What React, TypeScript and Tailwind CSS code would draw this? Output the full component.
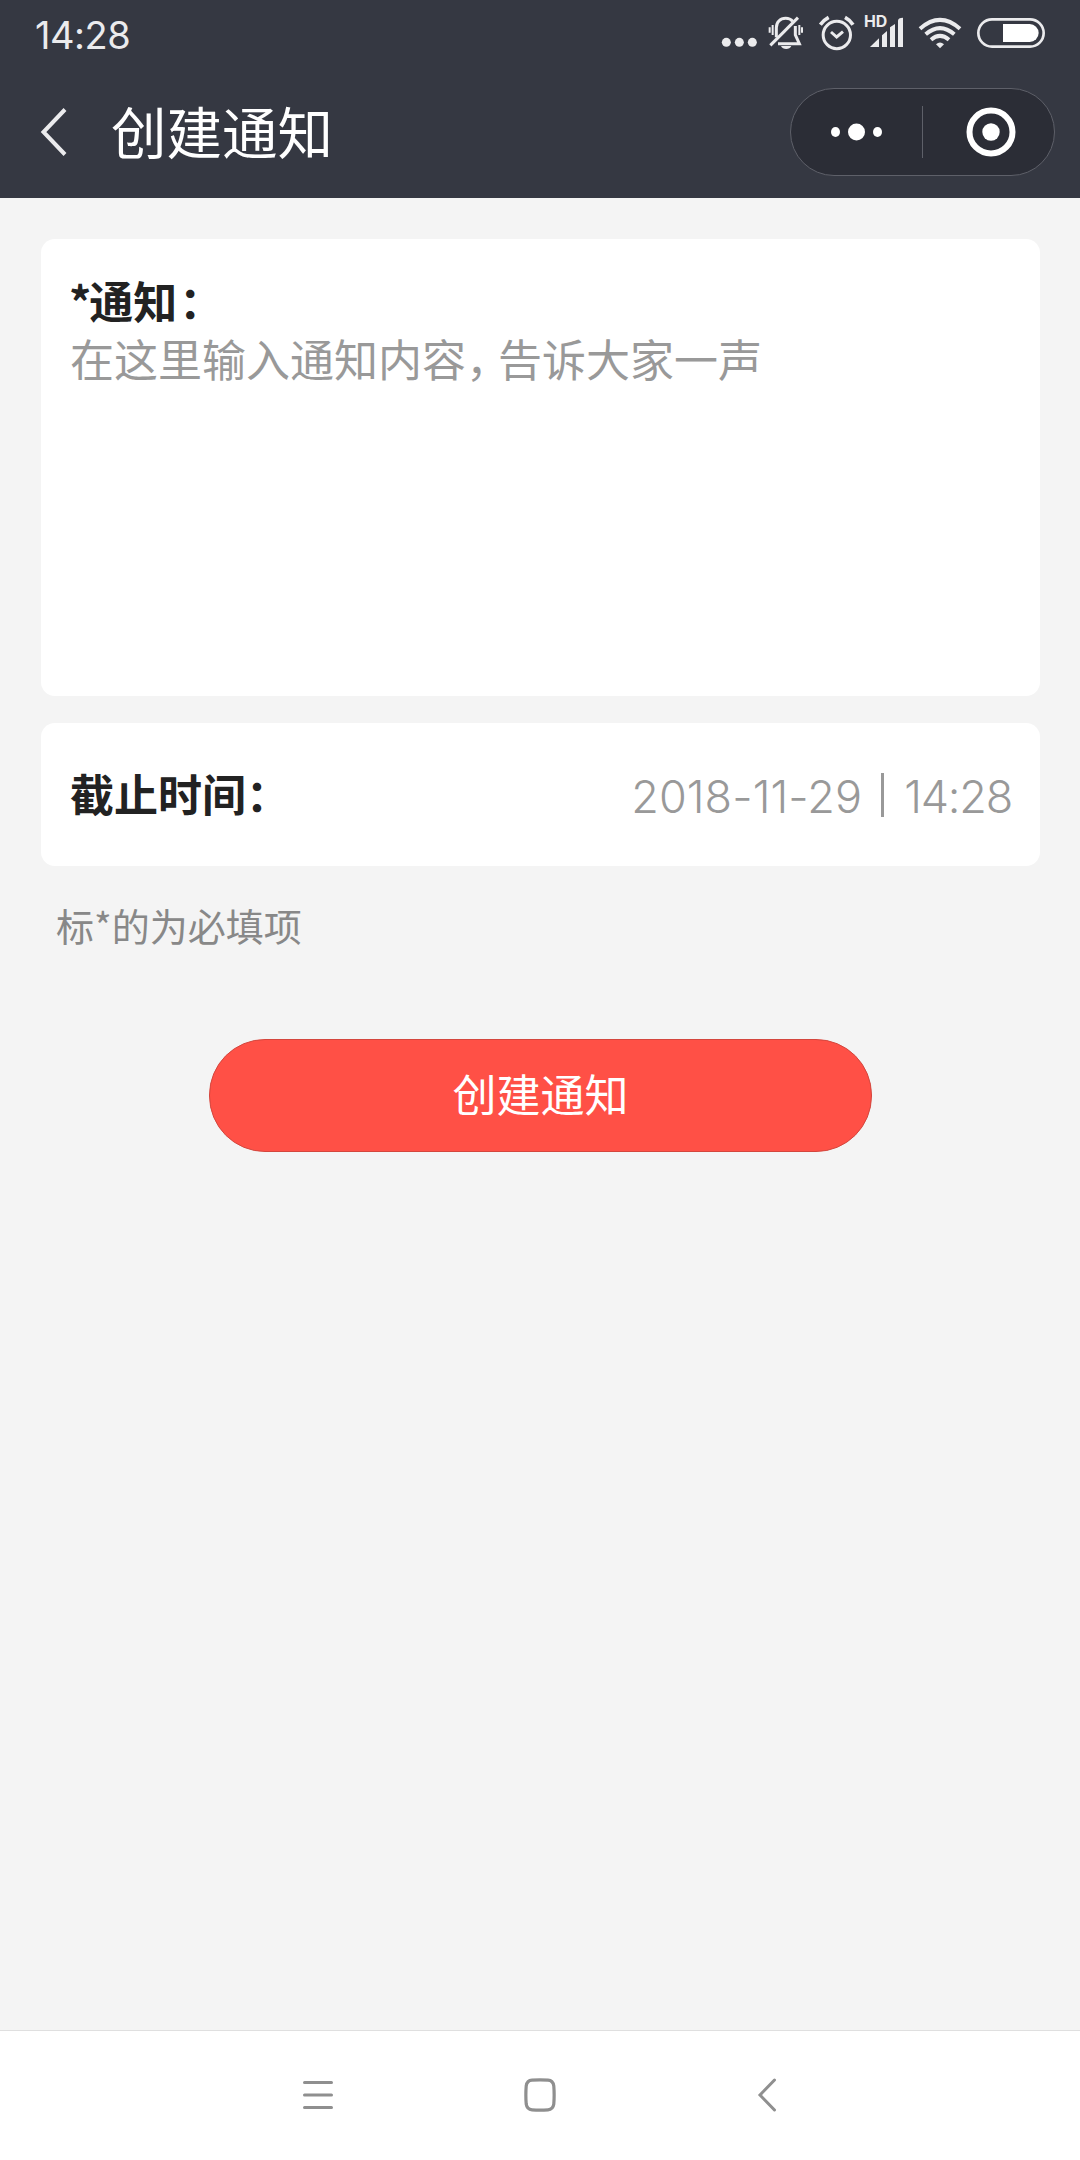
const cjk = "font-['Noto_Sans_CJK_SC',sans-serif]";

const StatusIcons = () => (
  <div className="flex items-center text-[#ebebed]">
    <svg className="w-[37px] h-[66px]" viewBox="0 0 111 198" fill="currentColor">
      <circle cx="16" cy="127" r="13.5" />
      <circle cx="55" cy="127" r="13.5" />
      <circle cx="94" cy="127" r="13.5" />
    </svg>
    {/* muted bell */}
    <svg
      className="w-9 h-[66px] ml-2.5"
      viewBox="0 0 108 198"
      fill="none"
      stroke="currentColor"
      strokeWidth="9"
    >
      <path d="M25 112V83c0-16 11-28 28-28 9 0 16 3 21 9M82 78v27l12 26H30" />
      <path d="M7 136L90 53" />
      <path d="M5 82v16M14 75v30M94 75v30M102 82v16" strokeWidth="6" />
      <path d="M39 138h31c-4 12-27 12-31 0z" fill="currentColor" stroke="none" />
    </svg>
    {/* alarm */}
    <svg
      className="w-9 h-[66px] ml-[15px]"
      viewBox="0 0 108 198"
      fill="none"
      stroke="currentColor"
      strokeWidth="9"
    >
      <circle cx="53.500" cy="105" r="41" />
      <path d="M36 96l17 15 19-16" />
      <path d="M4 74q10-14 25-22M78 52q15 8 24 22" strokeWidth="11" />
    </svg>
    {/* mobile signal */}
    <svg className="w-10 h-[66px] ml-[9px]" viewBox="0 0 120 198" fill="currentColor">
      <text x="0" y="81" className="font-['Inter',sans-serif] text-[46px] font-bold" textLength="70" lengthAdjust="spacingAndGlyphs">
        HD
      </text>
      <path d="M18 141l27-26v26z" />
      <path d="M54 106l15-13v48H54zM78 82l15-10v69H78zM102 62q0-9 15-9v88h-15z" />
    </svg>
    {/* wifi */}
    <svg
      className="w-11 h-[66px] ml-3.5"
      viewBox="0 0 132 198"
      fill="none"
      stroke="currentColor"
      strokeWidth="12"
    >
      <path d="M6 86q60-53 120 0" />
      <path d="M23 103q43-37 86 0" />
      <path d="M39 119q27-23 54 0" />
      <path d="M54 133q12-11 24 0l-12 12z" fill="currentColor" stroke="none" />
    </svg>
    {/* battery */}
    <svg className="w-[70px] h-[66px] ml-3.5" viewBox="0 0 210 198">
      <rect x="7" y="58" width="196" height="82" rx="41" fill="none" stroke="currentColor" strokeWidth="8" />
      <path d="M81 72h80a27 27 0 0 1 0 54H81z" fill="#fff" />
    </svg>
  </div>
);

const Header = () => (
  <header className="h-[198px] bg-[#353842]">
    <div className="flex h-[66px] items-center justify-between pl-[35px] pr-[34px]">
      <span className="font-['Inter',sans-serif] text-[38px] leading-none text-[#ebebed] tracking-[-0.5px] mt-1">
        14:28
      </span>
      <StatusIcons />
    </div>
    <div className="flex h-[132px] items-center pl-10 pr-[25px]">
      <svg className="w-7 h-12" viewBox="0 0 28 48" fill="none" stroke="#ebebed" strokeWidth="4">
        <path d="M25 1.500L3.500 24 25 46.500" />
      </svg>
      <h1 className="ml-[43px] -mt-[3px] text-[55.5px] leading-none font-normal text-white">
        创建通知
      </h1>
      <div className="ml-auto flex h-[88px] w-[265px] items-center rounded-full border border-[#5e6069] bg-[#2b2d36]">
        <svg className="w-[131px] h-[52px]" viewBox="0 0 131 52" fill="#fff">
          <ellipse cx="44.500" cy="26" rx="4.500" ry="5" />
          <circle cx="65.500" cy="26" r="8.500" />
          <ellipse cx="86.500" cy="26" rx="4.500" ry="5" />
        </svg>
        <div className="h-[52px] w-px bg-[#5e6069]" />
        <svg className="w-[131px] h-[52px]" viewBox="0 0 131 52">
          <circle cx="68" cy="26" r="21.500" fill="none" stroke="#fff" strokeWidth="6" />
          <circle cx="68" cy="26" r="8.700" fill="#fff" />
        </svg>
      </div>
    </div>
  </header>
);

const NavBar = () => (
  <nav className="flex h-[130px] items-center border-t border-[#dfdfdf] bg-white pb-0.5 pl-[302px]">
    <svg className="w-8 h-9" viewBox="0 0 32 36" fill="none" stroke="#8f8f8f" strokeWidth="3" strokeLinecap="round">
      <path d="M2.500 5.500h27M2.500 18h27M2.500 30.500h27" />
    </svg>
    <svg className="ml-[190px] w-8 h-9" viewBox="0 0 32 36" fill="none" stroke="#8f8f8f" strokeWidth="3.200">
      <path d="M8 3.200q8-.6 16 0 5 .3 5.800 5.800.7 9 0 18-.8 5.500-5.800 5.800-8 .6-16 0-5-.3-5.800-5.800-.7-9 0-18Q3 3.500 8 3.200z" />
    </svg>
    <svg className="ml-[201px] w-5 h-9" viewBox="0 0 20 36" fill="none" stroke="#8f8f8f" strokeWidth="3" strokeLinecap="round">
      <path d="M17.500 3L3 18l14.500 15" />
    </svg>
  </nav>
);

export default function App() {
  return (
    <div className={`${cjk} flex h-[2160px] w-[1080px] flex-col bg-[#f4f4f4]`}>
      <Header />
      <main className="flex flex-1 flex-col pr-10 pl-[41px] pt-[41px]">
        <section className="h-[457px] rounded-[14px] bg-white px-[29px] pt-8">
          <h2 className="text-[44px] leading-[58px] font-bold text-[#222]">
            <span className="-ml-px tracking-[-2px]">*</span>通知
            <span className="ml-0.5">：</span>
          </h2>
          <p className="text-[44px] leading-[58px] font-normal text-[#999]">
            在这里输入通知内容<span className="tracking-[-12px]">，</span>告诉大家一声
          </p>
        </section>
        <section className="mt-[27px] flex h-[143px] items-center justify-between rounded-[14px] bg-white px-[29px]">
          <h2 className="-mt-[3px] text-[44px] leading-none font-bold text-[#222]">截止时间：</h2>
          <div className="mt-1 flex items-center font-['Inter',sans-serif] text-[45px] leading-none font-light text-[#999]">
            <span className="tracking-[0.1px]">2018-11-29</span>
            <span className="mr-5 ml-[19px] -mt-1 h-11 w-[3px] bg-[#999]" />
            <span className="-mr-px tracking-[-1.2px]">14:28</span>
          </div>
        </section>
        <p className="mt-8 ml-[15px] text-[38px] leading-[54px] font-normal text-[#888]">
          标*的为必填项
        </p>
        <button className="mt-[87px] ml-[168px] h-[113px] w-[663px] rounded-[56px] border border-[#d4463d] bg-[#ff5046] pb-[5px] text-[44px] leading-none font-normal text-white">
          创建通知
        </button>
      </main>
      <NavBar />
    </div>
  );
}
